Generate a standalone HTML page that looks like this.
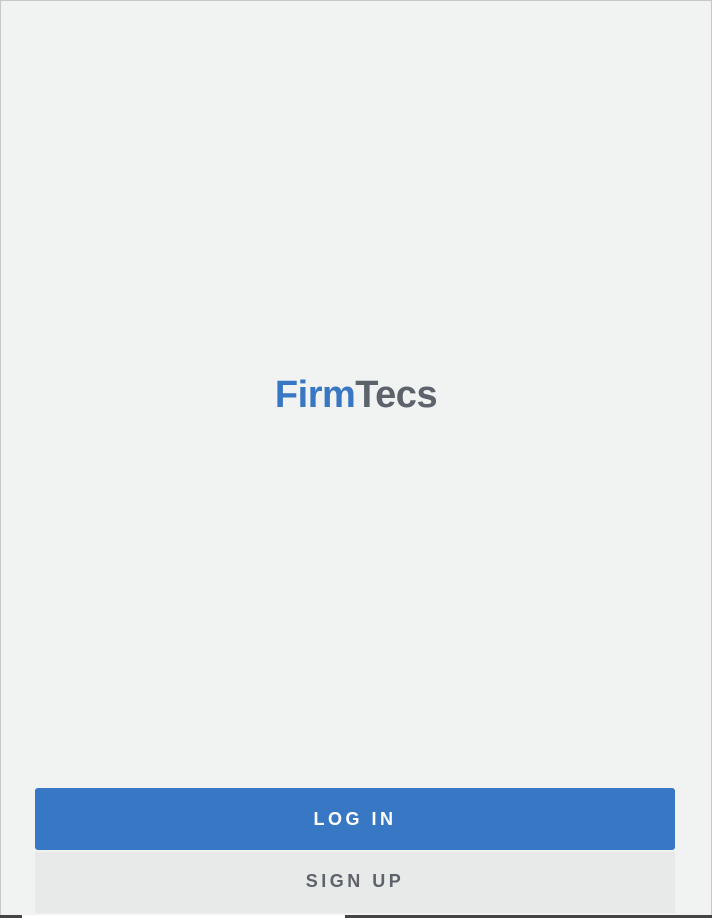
<!DOCTYPE html>
<html><head><meta charset="utf-8"><style>
html,body{margin:0;padding:0;}
body{width:712px;height:918px;background:#f1f2f2;position:relative;overflow:hidden;font-family:"Liberation Sans",sans-serif;}
.frame{position:absolute;left:0;top:0;width:710px;height:916px;border:1px solid #c8c8c8;border-bottom:none;}
.logo{position:absolute;left:0;width:712px;top:374px;text-align:center;font-size:38px;font-weight:bold;letter-spacing:-0.5px;padding-left:0;box-sizing:border-box;}
.logo .a{color:#3777c3}.logo .b{color:#5d636a}
.btn{position:absolute;left:35px;width:640px;text-align:center;font-weight:bold;font-size:18px;letter-spacing:3.5px;}
.login{top:788px;height:62px;line-height:62px;background:#3777c3;color:#fff;border-radius:3px;}
.signup{top:852px;height:61px;line-height:58px;background:#e8e9e9;color:#5d636a;}
.strip{position:absolute;left:0;top:915px;height:3px;width:712px;background:#444;}
.strip .w{position:absolute;left:22px;width:323px;height:3px;background:#fff;top:0}
</style></head><body>
<div class="frame"></div>
<div class="logo"><span class="a">Firm</span><span class="b">Tecs</span></div>
<div class="btn login">LOG IN</div>
<div class="btn signup">SIGN UP</div>
<div class="strip"><div class="w"></div></div>
</body></html>
